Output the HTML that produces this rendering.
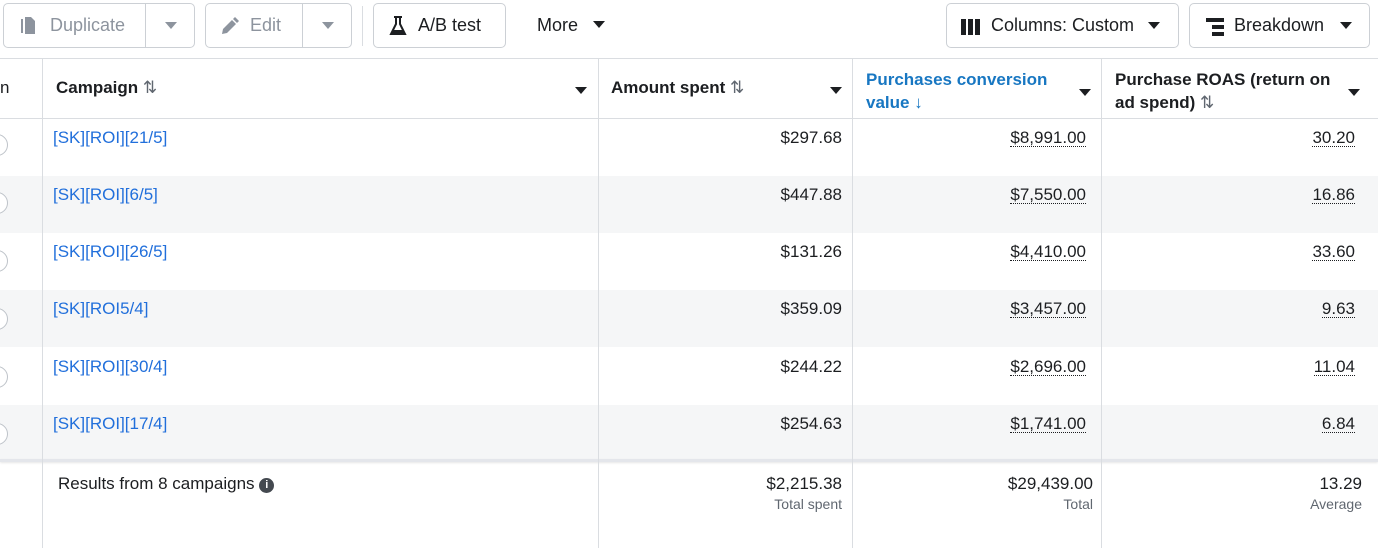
<!DOCTYPE html>
<html><head><style>
*{box-sizing:border-box;margin:0;padding:0}
body{width:1378px;height:548px;overflow:hidden;background:#fff;font-family:"Liberation Sans",sans-serif;color:#1c1e21;position:relative}
.btn{position:absolute;top:3px;height:45px;border:1px solid #ccd0d5;border-radius:5px;background:#fff;font-size:18px;display:flex;align-items:center}
.tri{display:inline-block;width:0;height:0;border-left:6px solid transparent;border-right:6px solid transparent;border-top:7px solid #1c1e21}
.g .tri{border-top-color:#8d949e}
.abs{position:absolute}
.hl{position:absolute;left:0;width:1378px;height:1px;background:#dadde1}
.vl{position:absolute;top:58px;width:1px;height:490px;background:#dadde1}
.row{position:absolute;left:0;width:1378px;height:57px}
.cell{position:absolute;font-size:17px;top:9px}
.lnk{color:#216fdb;left:53px}
.num{text-align:right}
.dot{border-bottom:1px dotted #1c1e21;line-height:17px;display:inline-block}
.hd{position:absolute;font-size:17px;font-weight:bold;line-height:23px}
.sm{font-size:14px;color:#606770}
.rad{position:absolute;left:-14px;width:22px;height:22px;border:1px solid #bec3c9;border-radius:50%;background:#fff}
</style></head><body>
<div class="btn g" style="left:3px;width:192px;color:#8d949e">
 <svg class="abs" style="left:14px;top:12px" width="20" height="20" viewBox="0 0 20 20"><path d="M4 3v14" stroke="#8d949e" stroke-width="2" fill="none"/><path d="M7 1h6l4 4v13H7z" fill="#8d949e"/></svg>
 <span class="abs" style="left:46px">Duplicate</span>
 <div class="abs" style="left:141px;top:0;width:1px;height:43px;background:#ccd0d5"></div>
 <span class="tri abs" style="left:161px;top:18px"></span>
</div>
<div class="btn g" style="left:205px;width:147px;color:#8d949e">
 <svg class="abs" style="left:14px;top:12px" width="20" height="20" viewBox="0 0 20 20"><path d="M2 18l1-5 9-9 4 4-9 9z" fill="#8d949e"/><path d="M13 3l2-2 4 4-2 2z" fill="#8d949e"/></svg>
 <span class="abs" style="left:44px">Edit</span>
 <div class="abs" style="left:96px;top:0;width:1px;height:43px;background:#ccd0d5"></div>
 <span class="tri abs" style="left:116px;top:18px"></span>
</div>
<div class="abs" style="left:362px;top:6px;width:1px;height:40px;background:#dadde1"></div>
<div class="btn" style="left:373px;width:133px">
 <svg class="abs" style="left:14px;top:11px" width="20" height="22" viewBox="0 0 20 22"><path d="M6 2h8M8 2v7L3 19h14L12 9V2" stroke="#1c1e21" stroke-width="2" fill="none"/><path d="M5 15h10l2 4H3z" fill="#1c1e21"/></svg>
 <span class="abs" style="left:44px">A/B test</span>
</div>
<span class="abs" style="left:537px;top:15px;font-size:18px">More</span>
<span class="tri abs" style="left:593px;top:21px"></span>
<div class="btn" style="left:946px;width:233px">
 <svg class="abs" style="left:14px;top:15px" width="20" height="16" viewBox="0 0 20 16"><rect x="0" y="0" width="5" height="16" fill="#1c1e21"/><rect x="7" y="0" width="5" height="16" fill="#1c1e21"/><rect x="14" y="0" width="5" height="16" fill="#1c1e21"/></svg>
 <span class="abs" style="left:44px">Columns: Custom</span>
 <span class="tri abs" style="left:201px;top:18px"></span>
</div>
<div class="btn" style="left:1189px;width:181px">
 <svg class="abs" style="left:16px;top:14px" width="18" height="18" viewBox="0 0 18 18"><rect x="0" y="0" width="18" height="4" fill="#1c1e21"/><rect x="6" y="7" width="12" height="4" fill="#1c1e21"/><rect x="6" y="14" width="12" height="4" fill="#1c1e21"/></svg>
 <span class="abs" style="left:44px">Breakdown</span>
 <span class="tri abs" style="left:150px;top:18px"></span>
</div>

<div class="row" style="top:176px;background:#f5f6f7"></div>
<div class="row" style="top:290px;background:#f5f6f7"></div>
<div class="row" style="top:405px;height:55px;background:#f5f6f7"></div>
<div class="hl" style="top:58px"></div>
<div class="hl" style="top:118px"></div>
<div class="hl" style="top:459px;height:3px;background:#e4e6eb;box-shadow:0 1px 2px rgba(0,0,0,.1)"></div>
<div class="vl" style="left:42px"></div>
<div class="vl" style="left:598px"></div>
<div class="vl" style="left:852px"></div>
<div class="vl" style="left:1101px"></div>

<span class="hd" style="left:0;top:76px;font-weight:normal">n</span>
<span class="hd" style="left:56px;top:76px">Campaign <span style="color:#606770;font-weight:normal">⇅</span></span>
<span class="tri abs" style="left:575px;top:87px"></span>
<span class="hd" style="left:611px;top:76px">Amount spent <span style="color:#606770;font-weight:normal">⇅</span></span>
<span class="tri abs" style="left:830px;top:87px"></span>
<span class="hd" style="left:866px;top:68px;color:#1877c2">Purchases conversion<br>value <span style="font-weight:normal">↓</span></span>
<span class="tri abs" style="left:1079px;top:89px"></span>
<span class="hd" style="left:1115px;top:68px">Purchase ROAS (return on<br>ad spend) <span style="color:#606770;font-weight:normal">⇅</span></span>
<span class="tri abs" style="left:1348px;top:89px"></span>

<div class="row" style="top:119px"><div class="cell lnk">[SK][ROI][21/5]</div><div class="cell num" style="right:536px">$297.68</div><div class="cell num" style="right:292px"><span class="dot">$8,991.00</span></div><div class="cell num" style="right:23px"><span class="dot">30.20</span></div></div>
<div class="row" style="top:176px"><div class="cell lnk">[SK][ROI][6/5]</div><div class="cell num" style="right:536px">$447.88</div><div class="cell num" style="right:292px"><span class="dot">$7,550.00</span></div><div class="cell num" style="right:23px"><span class="dot">16.86</span></div></div>
<div class="row" style="top:233px"><div class="cell lnk">[SK][ROI][26/5]</div><div class="cell num" style="right:536px">$131.26</div><div class="cell num" style="right:292px"><span class="dot">$4,410.00</span></div><div class="cell num" style="right:23px"><span class="dot">33.60</span></div></div>
<div class="row" style="top:290px"><div class="cell lnk">[SK][ROI5/4]</div><div class="cell num" style="right:536px">$359.09</div><div class="cell num" style="right:292px"><span class="dot">$3,457.00</span></div><div class="cell num" style="right:23px"><span class="dot">9.63</span></div></div>
<div class="row" style="top:348px"><div class="cell lnk">[SK][ROI][30/4]</div><div class="cell num" style="right:536px">$244.22</div><div class="cell num" style="right:292px"><span class="dot">$2,696.00</span></div><div class="cell num" style="right:23px"><span class="dot">11.04</span></div></div>
<div class="row" style="top:405px"><div class="cell lnk">[SK][ROI][17/4]</div><div class="cell num" style="right:536px">$254.63</div><div class="cell num" style="right:292px"><span class="dot">$1,741.00</span></div><div class="cell num" style="right:23px"><span class="dot">6.84</span></div></div>
<div class="rad" style="top:134px"></div>
<div class="rad" style="top:192px"></div>
<div class="rad" style="top:250px"></div>
<div class="rad" style="top:308px"></div>
<div class="rad" style="top:366px"></div>
<div class="rad" style="top:423px"></div>

<div class="abs" style="left:58px;top:474px;font-size:17px">Results from 8 campaigns <span style="display:inline-block;width:15px;height:15px;border-radius:50%;background:#444950;color:#fff;font-size:11px;font-weight:bold;text-align:center;line-height:15px;vertical-align:1px">i</span></div>
<div class="abs num" style="right:536px;top:474px;font-size:17px">$2,215.38<br><span class="sm">Total spent</span></div>
<div class="abs num" style="right:285px;top:474px;font-size:17px">$29,439.00<br><span class="sm">Total</span></div>
<div class="abs num" style="right:16px;top:474px;font-size:17px">13.29<br><span class="sm">Average</span></div>
</body></html>
